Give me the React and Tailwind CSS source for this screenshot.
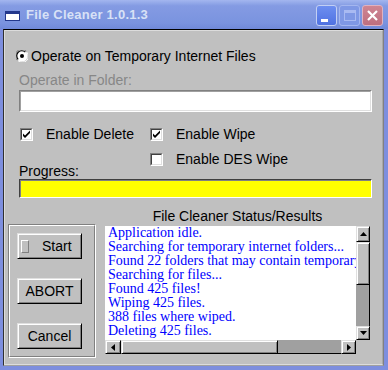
import React from "react";

const raised =
  "border border-t-[#dfdfdf] border-l-[#dfdfdf] border-r-black border-b-black bg-[#c0c0c0] shadow-[inset_1px_1px_#ffffff,inset_-1px_-1px_#808080]";

const Arrow = ({ dir }) => {
  const pts = {
    up: "3.5,0 7,4 0,4",
    down: "0,0 7,0 3.5,4",
    left: "4,0 4,7 0,3.5",
    right: "0,0 4,3.5 0,7",
  }[dir];
  const vertical = dir === "up" || dir === "down";
  return (
    <svg width={vertical ? 7 : 4} height={vertical ? 4 : 7} viewBox={vertical ? "0 0 7 4" : "0 0 4 7"}>
      <polygon points={pts} fill="#000" />
    </svg>
  );
};

const Check = ({ checked }) => (
  <div className="h-[13px] w-[13px] shrink-0 border border-t-[#808080] border-l-[#808080] border-r-white border-b-white">
    <div className="relative h-full w-full border border-t-[#404040] border-l-[#404040] border-r-[#dfdfdf] border-b-[#dfdfdf] bg-white">
      {checked && (
        <svg width="9" height="9" viewBox="0 0 9 9" className="absolute left-0 top-0">
          <path d="M1 3.5v2.5l2 2l5-5V0.5l-5 5z" fill="#000" />
        </svg>
      )}
    </div>
  </div>
);

const Radio = () => (
  <svg width="12" height="12" viewBox="0 0 12 12" className="shrink-0">
    <circle cx="6" cy="6" r="5.5" fill="#ffffff" />
    <path d="M1.1 10.2A5.5 5.5 0 0 1 10.2 1.1" fill="none" stroke="#808080" strokeWidth="1" />
    <path d="M2.2 9.3A4.4 4.4 0 0 1 9.3 2.2" fill="none" stroke="#000000" strokeWidth="1.2" />
    <path d="M10.6 2A5.5 5.5 0 0 1 2 10.6" fill="none" stroke="#ffffff" strokeWidth="1" />
    <circle cx="6" cy="6" r="2" fill="#000" />
  </svg>
);

const lines = [
  "Application idle.",
  "Searching for temporary internet folders...",
  "Found 22 folders that may contain temporary internet files.",
  "Searching for files...",
  "Found 425 files!",
  "Wiping 425 files.",
  "388 files where wiped.",
  "Deleting 425 files.",
];

export default function App() {
  return (
    <div className="flex h-[370px] w-[388px] flex-col overflow-hidden bg-[#7d8ede] font-['Liberation_Sans',Arial,sans-serif] text-[14px] text-black">
      {/* title bar */}
      <div className="flex h-[29px] shrink-0 items-start bg-[linear-gradient(#a3b6ef_0%,#849be3_20%,#7a93df_80%,#7089d9_100%)]">
        <div className="ml-[5px] mt-[11px] h-[10px] w-[15px] border border-t-[3px] border-[#23388c] bg-white" />
        <div className="ml-[6px] mt-[7px] text-[13px] font-bold leading-[16px] tracking-[0.25px] text-[#d8e1f6]">
          File Cleaner 1.0.1.3
        </div>
        <div className="ml-auto mr-[5px] mt-[5px] flex gap-[2px]">
          <div className="relative h-[21px] w-[21px] rounded-[3px] border border-[#c2cff4] bg-[linear-gradient(#6d8ef0,#4f72e2)]">
            <div className="absolute left-[4px] top-[13px] h-[3px] w-[7px] bg-white" />
          </div>
          <div className="flex h-[21px] w-[21px] items-center justify-center rounded-[3px] border border-[#a4b6ef] bg-[#7f98e5]">
            <div className="h-[11px] w-[12px] border border-t-[3px] border-[#a9baf2]" />
          </div>
          <div className="flex h-[21px] w-[21px] items-center justify-center rounded-[3px] border border-[#dfb2c0] bg-[linear-gradient(#cf8592,#bd6f80)]">
            <svg width="11" height="11" viewBox="0 0 11 11">
              <path d="M1 1L10 10M10 1L1 10" stroke="#fff" strokeWidth="2.2" />
            </svg>
          </div>
        </div>
      </div>

      {/* body */}
      <div className="ml-[3px] h-[337px] w-[381px] border border-t-black border-l-[#303030] border-r-[#808080] border-b-[#a0a0a0] bg-[#c0c0c0]">
        <div className="flex h-full flex-col border border-t-[#dcdcdc] border-l-[#dcdcdc] border-r-[#a8a8a8] border-b-[#dcdcdc]">
          <div className="ml-[11px] mt-[17px] flex h-[16px] items-center gap-[3px] leading-[16px]">
            <Radio />
            <span>Operate on Temporary Internet Files</span>
          </div>

          <div className="ml-[14px] mt-[8px] h-[16px] leading-[16px] text-[#878787]">Operate in Folder:</div>

          <div className="ml-[14px] mt-[2px] h-[22px] w-[353px] border border-t-[#808080] border-l-[#808080] border-r-white border-b-white">
            <div className="h-full w-full border border-t-[#a0a0a0] border-l-[#a0a0a0] border-r-[#dfdfdf] border-b-[#dfdfdf] bg-white" />
          </div>

          <div className="ml-[15px] mt-[14px] flex h-[16px] items-center leading-[16px]">
            <div className="flex w-[130px] items-center">
              <Check checked />
              <span className="ml-[13px]">Enable Delete</span>
            </div>
            <div className="flex items-center">
              <Check checked />
              <span className="ml-[13px]">Enable Wipe</span>
            </div>
          </div>

          <div className="ml-[14px] mt-[9px] flex h-[28px]">
            <div className="w-[131px] self-end leading-[15px]">Progress:</div>
            <div className="flex h-[16px] items-center leading-[16px]">
              <Check />
              <span className="ml-[13px]">Enable DES Wipe</span>
            </div>
          </div>

          <div className="ml-[14px] h-[19px] w-[353px] border border-t-[#404040] border-l-[#404040] border-r-white border-b-white bg-[#ffff00] shadow-[inset_1px_1px_#808080]" />

          <div className="mt-[10px] flex">
            <div className="ml-[3px] mt-[16px] h-[134px] w-[88px] border border-t-[#808080] border-l-[#808080] border-r-white border-b-white">
              <div className="flex h-full flex-col gap-[19px] border border-t-white border-l-white border-r-[#808080] border-b-[#808080] pl-[7px] pt-[7px]">
                <div className={`flex h-[26px] w-[65px] items-center ${raised}`}>
                  <div className="ml-[3px] h-[13px] w-[8px] border border-t-white border-l-white border-r-[#808080] border-b-[#808080]" />
                  <span className="ml-[13px] leading-[16px]">Start</span>
                </div>
                <div className={`flex h-[26px] w-[65px] items-center justify-center leading-[16px] ${raised}`}>ABORT</div>
                <div className={`flex h-[26px] w-[65px] items-center justify-center leading-[16px] ${raised}`}>Cancel</div>
              </div>
            </div>

            <div className="ml-[9px] w-[265px]">
              <div className="h-[16px] text-center leading-[16px]">File Cleaner Status/Results</div>
              <div className="mt-[2px] grid grid-cols-[251px_14px] grid-rows-[114px_14px]">
                <div className="overflow-hidden bg-white pl-[3px] font-['Liberation_Serif','Times_New_Roman',serif] text-[14px] leading-[14px] text-[#0000ff]">
                  {lines.map((l) => (
                    <div key={l} className="whitespace-nowrap">
                      {l}
                    </div>
                  ))}
                </div>
                <div className="flex flex-col">
                  <div className={`flex h-[16px] items-center justify-center ${raised}`}>
                    <Arrow dir="up" />
                  </div>
                  <div className={`h-[43px] ${raised}`} />
                  <div className="flex-1 border-r border-black bg-[#a0a0a0]" />
                  <div className={`flex h-[14px] items-center justify-center ${raised}`}>
                    <Arrow dir="down" />
                  </div>
                </div>
                <div className="flex">
                  <div className={`flex w-[16px] items-center justify-center ${raised}`}>
                    <Arrow dir="left" />
                  </div>
                  <div className={`w-[157px] ${raised}`} />
                  <div className="flex-1 border-b border-black bg-[#a0a0a0]" />
                  <div className={`flex w-[15px] items-center justify-center ${raised}`}>
                    <Arrow dir="right" />
                  </div>
                </div>
                <div />
              </div>
            </div>
          </div>
        </div>
      </div>
    </div>
  );
}
